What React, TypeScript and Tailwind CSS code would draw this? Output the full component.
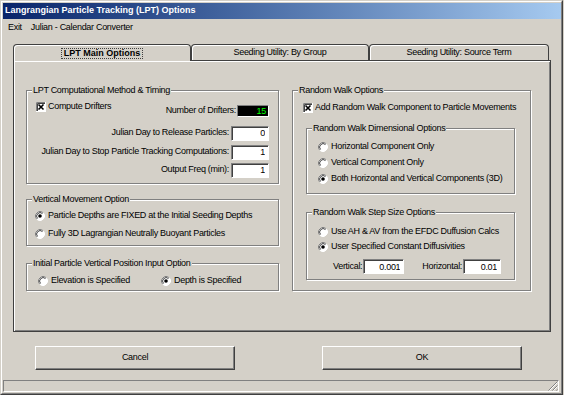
import type { ReactNode } from "react";

const FONT = "font-['Liberation_Sans',Arial,sans-serif]";

function Check() {
  return (
    <svg width="10" height="10" viewBox="0 0 10 10" className="shrink-0">
      <rect x="0" y="0" width="10" height="10" fill="#fff" />
      <path d="M0.5 10V0.5H10" fill="none" stroke="#808080" />
      <path d="M1.5 9V1.5H9" fill="none" stroke="#404040" />
      <path d="M0 9.5H9.5V0" fill="none" stroke="#fff" />
      <path d="M2.5 2.5L7.5 7.5M7.5 2.5L2.5 7.5" stroke="#000" strokeWidth="1.6" />
    </svg>
  );
}

function Radio({ on }: { on?: boolean }) {
  return (
    <svg width="10" height="10" viewBox="0 0 10 10" className="shrink-0">
      <circle cx="5" cy="5" r="4.5" fill="#fff" />
      <path d="M1.82 8.18A4.5 4.5 0 0 1 8.18 1.82" fill="none" stroke="#808080" />
      <path d="M2.53 7.47A3.5 3.5 0 0 1 7.47 2.53" fill="none" stroke="#404040" />
      <path d="M8.18 1.82A4.5 4.5 0 0 1 1.82 8.18" fill="none" stroke="#fff" />
      {on && <circle cx="5" cy="5" r="1.8" fill="#000" />}
    </svg>
  );
}

function Option({ on, label, className = "" }: { on?: boolean; label: string; className?: string }) {
  return (
    <div className={`flex items-center gap-[3px] h-[10px] ${className}`}>
      <Radio on={on} />
      <span>{label}</span>
    </div>
  );
}

function Field({ value, className = "" }: { value: string; className?: string }) {
  return (
    <input
      readOnly
      value={value}
      className={`h-[15px] bg-white border border-t-[#808080] border-l-[#808080] border-b-white border-r-white shadow-[inset_1px_1px_0_#404040] text-right pr-[3px] outline-none ${className}`}
    />
  );
}

function Group({ title, className = "", children }: { title: string; className?: string; children?: ReactNode }) {
  return (
    <div className={`relative border border-[#808080] shadow-[inset_1px_1px_0_#fff,1px_1px_0_#fff] ${className}`}>
      <span className="absolute -top-[6px] left-[5px] bg-[#d4d0c8] px-[1px] leading-[11px] whitespace-nowrap">
        {title}
      </span>
      {children}
    </div>
  );
}

function Tab({ label, active, className = "" }: { label: string; active?: boolean; className?: string }) {
  return (
    <div
      className={`flex items-center justify-center border-t border-l border-r border-[#404040] rounded-t-[4px] shadow-[inset_1px_1px_0_#fff] bg-[#d4d0c8] ${
        active ? "relative z-10 h-[17px] -mb-[1px] font-bold tracking-normal" : "h-[16px]"
      } ${className}`}
    >
      {active ? (
        <span className="border border-dotted border-[#404040] px-[2px] leading-[9px]">{label}</span>
      ) : (
        <span>{label}</span>
      )}
    </div>
  );
}

function Button({ label, className = "" }: { label: string; className?: string }) {
  return (
    <button
      className={`w-[200px] h-[24px] bg-[#d4d0c8] border border-t-white border-l-white border-r-[#404040] border-b-[#404040] shadow-[inset_-1px_-1px_0_#808080] ${className}`}
    >
      {label}
    </button>
  );
}

export default function App() {
  return (
    <div className={`w-[564px] h-[395px] bg-[#d4d0c8] text-black text-[9px] tracking-[-0.3px] ${FONT}`}>
      <div className="w-[563px] h-[395px] border border-l-[#d4d0c8] border-t-[#d4d0c8] border-r-[#404040] border-b-[#404040]">
        <div className="h-full pl-[1px] pt-[1px] border border-l-white border-t-white border-r-[#808080] border-b-[#808080] flex flex-col">
          <div className="h-[16px] shrink-0 flex items-center pl-[2px] bg-gradient-to-r from-[#0a246a] to-[#a6caf0] text-white font-bold tracking-normal">
            Langrangian Particle Tracking (LPT) Options
          </div>

          <div className="h-[18px] shrink-0 flex items-center gap-[9px] pl-[5px]">
            <span>Exit</span>
            <span>Julian - Calendar Converter</span>
          </div>

          <div className="flex ml-[10px] mt-[7px]">
            <Tab label="LPT Main Options" active className="w-[178px]" />
            <Tab label="Seeding Utility: By Group" className="w-[178px]" />
            <Tab label="Seeding Utility: Source Term" className="w-[180px]" />
          </div>

          <div className="ml-[10px] w-[538px] h-[272px] shrink-0 border border-[#404040] shadow-[inset_1px_1px_0_#fff,inset_-1px_-1px_0_#808080] flex pl-[12px] pt-[29px] gap-[13px]">
            <div className="w-[253px] flex flex-col">
              <Group title="LPT Computational Method & Timing" className="h-[94px] pt-[11px] pl-[9px] pr-[9px]">
                <div className="flex items-start">
                  <div className="flex items-center gap-[2px] h-[10px]">
                    <Check />
                    <span>Compute Drifters</span>
                  </div>
                  <div className="ml-auto mt-[2px] flex items-center gap-[1px]">
                    <span>Number of Drifters:</span>
                    <div className="w-[32px] h-[12px] bg-black border border-t-[#808080] border-l-[#808080] border-b-white border-r-white text-right pr-[2px] leading-[10px] text-[#00ff00]">
                      15
                    </div>
                  </div>
                </div>
                <div className="flex items-center justify-end gap-[2px] mt-[8px]">
                  <span>Julian Day to Release Particles:</span>
                  <Field value="0" className="w-[38px]" />
                </div>
                <div className="flex items-center justify-end gap-[2px] mt-[4px]">
                  <span>Julian Day to Stop Particle Tracking Computations:</span>
                  <Field value="1" className="w-[38px]" />
                </div>
                <div className="flex items-center justify-end gap-[2px] mt-[3px]">
                  <span>Output Freq (min):</span>
                  <Field value="1" className="w-[38px]" />
                </div>
              </Group>

              <Group title="Vertical Movement Option" className="h-[47px] mt-[15px] pt-[11px] pl-[8px] flex flex-col gap-[8px]">
                <Option on label="Particle Depths are FIXED at the Initial Seeding Depths" />
                <Option label="Fully 3D Lagrangian Neutrally Buoyant Particles" />
              </Group>

              <Group title="Initial Particle Vertical Position Input Option" className="h-[28px] mt-[17px] pt-[12px] pl-[11px] flex">
                <Option label="Elevation is Specified" className="w-[123px]" />
                <Option on label="Depth is Specified" />
              </Group>
            </div>

            <Group title="Random Walk Options" className="w-[239px] h-[201px] pt-[12px] pl-[10px]">
              <div className="flex items-center gap-[2px] h-[10px]">
                <Check />
                <span>Add Random Walk Component to Particle Movements</span>
              </div>

              <Group title="Random Walk Dimensional Options" className="w-[209px] h-[66px] ml-[3px] mt-[15px] pt-[13px] pl-[11px] flex flex-col gap-[6px]">
                <Option label="Horizontal Component Only" />
                <Option label="Vertical Component Only" />
                <Option on label="Both Horizontal and Vertical Components (3D)" />
              </Group>

              <Group title="Random Walk Step Size Options" className="w-[209px] h-[68px] ml-[3px] mt-[18px] pt-[14px] pl-[11px]">
                <div className="flex flex-col gap-[5px]">
                  <Option label="Use AH & AV from the EFDC Duffusion Calcs" />
                  <Option on label="User Specified Constant Diffusivities" />
                </div>
                <div className="flex items-center mt-[7px] ml-[15px]">
                  <span>Vertical:</span>
                  <Field value="0.001" className="w-[41px] ml-[1px]" />
                  <span className="ml-[18px]">Horizontal:</span>
                  <Field value="0.01" className="w-[38px] ml-[1px]" />
                </div>
              </Group>
            </Group>
          </div>

          <div className="flex mt-[14px] ml-[32px] gap-[87px]">
            <Button label="Cancel" />
            <Button label="OK" />
          </div>

          <div className="mt-[10px] w-[556px] h-[12px] shrink-0 border border-t-[#808080] border-l-[#808080] border-b-white border-r-white flex justify-end items-end">
            <svg width="10" height="10" viewBox="0 0 10 10">
              <path d="M9.5 0.5L0.5 9.5M9.5 4.5L4.5 9.5M9.5 8.5L8.5 9.5" stroke="#808080" />
              <path d="M9.5 1.5L1.5 9.5M9.5 5.5L5.5 9.5" stroke="#fff" />
            </svg>
          </div>
        </div>
      </div>
    </div>
  );
}
